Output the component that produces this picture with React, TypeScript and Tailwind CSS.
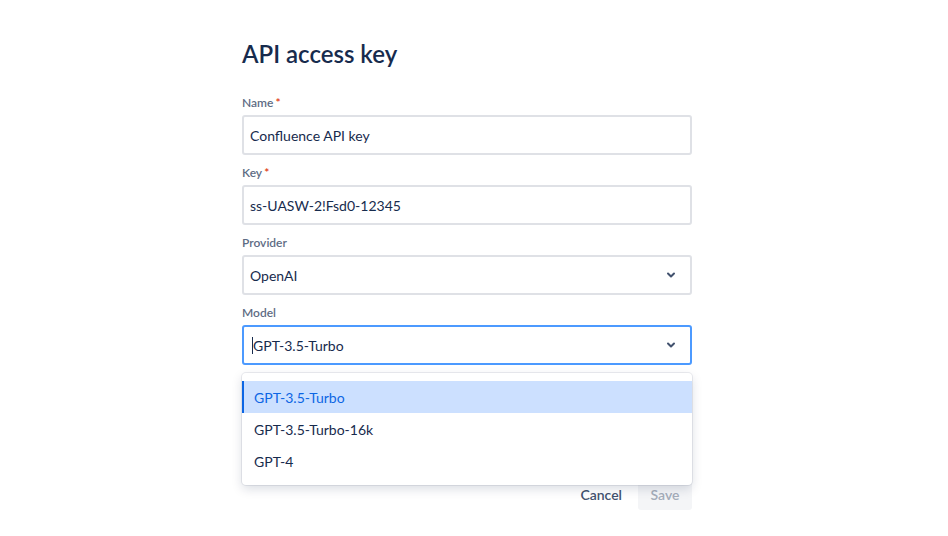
import { ChevronDown } from "lucide-react";

const font = { fontFamily: "Lato, 'Noto Sans', sans-serif" };

const Label = ({ text, required }: { text: string; required?: boolean }) => (
  <label className="flex h-[20px] items-center text-[12px] font-semibold leading-4 text-[#5E6C84]">
    {text}
    {required && <span className="ml-[2px] text-[#DE350B]">*</span>}
  </label>
);

const TextField = ({ value }: { value: string }) => (
  <div className="flex h-[40px] items-center rounded-[3px] border-2 border-[#DFE1E6] bg-white px-[6px] text-[14px] text-[#172B4D]">
    {value}
  </div>
);

const Select = ({ value, focused }: { value: string; focused?: boolean }) => (
  <div
    className={
      focused
        ? "flex h-[40px] items-center justify-between rounded-[3px] border-2 border-[#4C9AFF] bg-white pl-[8px] pr-[13px] text-[14px] text-[#172B4D]"
        : "flex h-[40px] items-center justify-between rounded-[3px] border-2 border-[#DFE1E6] bg-white pl-[6px] pr-[13px] text-[14px] text-[#172B4D]"
    }
  >
    <span className="flex items-center">
      {focused && <span className="inline-block h-[17px] w-px bg-[#172B4D]" />}
      {value}
    </span>
    <ChevronDown className="h-[12px] w-[12px] text-[#42526E]" strokeWidth={4} />
  </div>
);

const options = ["GPT-3.5-Turbo", "GPT-3.5-Turbo-16k", "GPT-4"];

export default function App() {
  return (
    <div className="flex min-h-[536px] justify-center bg-white" style={font}>
      <div className="w-[450px] -translate-x-[7px] pt-[38px]">
        <h1 className="text-[24px] font-semibold leading-[32px] text-[#172B4D]">API access key</h1>
        <div className="mt-[23px] flex flex-col">
          <Label text="Name" required />
          <div className="mt-[2px]">
            <TextField value="Confluence API key" />
          </div>
          <div className="mt-[8px]">
            <Label text="Key" required />
          </div>
          <div className="mt-[2px]">
            <TextField value="ss-UASW-2!Fsd0-12345" />
          </div>
          <div className="mt-[8px]">
            <Label text="Provider" />
          </div>
          <div className="mt-[2px]">
            <Select value="OpenAI" />
          </div>
          <div className="mt-[8px]">
            <Label text="Model" />
          </div>
          <div className="relative mt-[2px]">
            <Select value="GPT-3.5-Turbo" focused />
            <div className="absolute left-0 right-0 top-[48px] z-10 rounded-[4px] bg-white py-[8px] shadow-[0_0_0_1px_rgba(9,30,66,0.08),0_4px_11px_rgba(9,30,66,0.15)]">
              {options.map((o, i) => (
                <div
                  key={o}
                  className={
                    i === 0
                      ? "flex h-[32px] items-center border-l-2 border-[#0C66E4] bg-[#CCE0FF] pl-[10px] text-[14px] text-[#0C66E4]"
                      : "flex h-[32px] items-center pl-[12px] text-[14px] text-[#172B4D]"
                  }
                >
                  {o}
                </div>
              ))}
            </div>
          </div>
          <div className="mt-[113px] flex justify-end gap-[4px]">
            <button className="h-[32px] rounded-[3px] px-[12px] text-[14px] font-semibold text-[#42526E]">
              Cancel
            </button>
            <button
              disabled
              className="h-[32px] w-[54px] rounded-[3px] bg-[#F4F5F7] text-[14px] font-semibold text-[#A5ADBA]"
            >
              Save
            </button>
          </div>
        </div>
      </div>
    </div>
  );
}
